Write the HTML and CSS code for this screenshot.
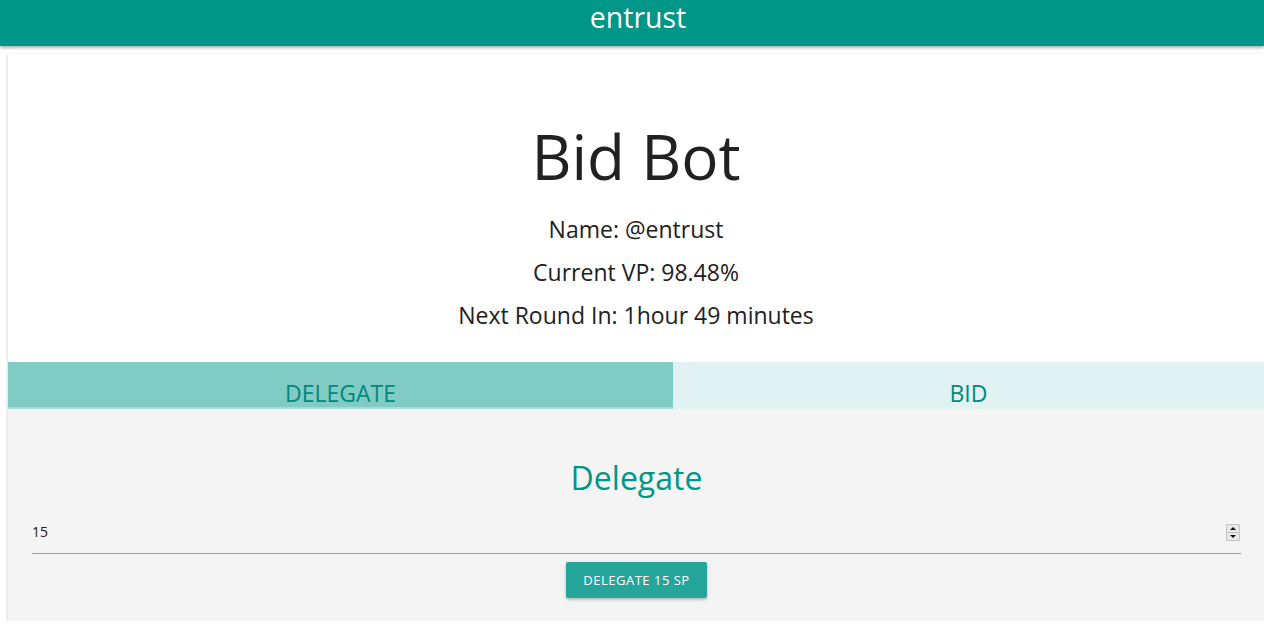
FILE: index.html
```html
<!DOCTYPE html>
<html>
<head>
<meta charset="utf-8">
<link rel="stylesheet" href="styles.css">
</head>
<body>
<header class="topbar"><span class="brand">entrust</span></header>
<main class="card">
  <section class="intro">
    <h1 class="title">Bid Bot</h1>
    <p class="info">Name: @entrust</p>
    <p class="info">Current VP: 98.48%</p>
    <p class="info">Next Round In: 1hour 49 minutes</p>
  </section>
  <nav class="tabs">
    <div class="tab tab-active">DELEGATE</div>
    <div class="tab tab-bid">BID</div>
  </nav>
  <section class="panel">
    <h2 class="panel-title">Delegate</h2>
    <div class="field">
      <span class="field-value">15</span>
      <span class="spinner"><span class="spin-up"></span><span class="spin-down"></span></span>
    </div>
    <div class="actions"><button class="btn">DELEGATE 15 SP</button></div>
  </section>
</main>
</body>
</html>
```
FILE: styles.css
```css
html, body {
  margin: 0;
  padding: 0;
  overflow: hidden;
  background: #ffffff;
  font-family: "Open Sans", "Noto Sans", sans-serif;
  color: #212121;
}
.topbar {
  height: 46px;
  padding-left: 12px;
  background: #009688;
  box-shadow: 0 2px 3px rgba(0,0,0,0.3);
  display: flex;
  justify-content: center;
  position: relative;
  z-index: 2;
}
.brand {
  color: #ffffff;
  font-size: 28.5px;
  line-height: 34px;
}
.card {
  margin: 8px 0 0 8px;
  background: #ffffff;
  box-shadow: 0 1px 3px rgba(0,0,0,0.25);
  display: flex;
  flex-direction: column;
}
.intro {
  padding: 62px 0 25px;
  text-align: center;
}
.title {
  margin: 0 0 12px;
  font-size: 62px;
  font-weight: 400;
  line-height: 80px;
}
.info {
  margin: 0;
  font-size: 23px;
  line-height: 43px;
}
.tabs {
  display: flex;
  height: 47px;
}
.tab {
  display: flex;
  align-items: flex-end;
  justify-content: center;
  padding-bottom: 2px;
  box-sizing: border-box;
  font-size: 23px;
  line-height: 28px;
  color: #00897b;
}
.tab-active {
  flex: 0 0 665px;
  background: #80cbc4;
  border-bottom: 2px solid #a6dbd5;
  padding-bottom: 0;
}
.tab-bid {
  flex: 1 1 auto;
  background: #e0f2f1;
}
.panel {
  background: #f4f4f4;
  padding: 49px 23px 23px 24px;
  display: flex;
  flex-direction: column;
}
.panel-title {
  margin: 0;
  text-align: center;
  font-size: 32px;
  font-weight: 400;
  line-height: 40px;
  color: #009688;
}
.field {
  margin-top: 11px;
  height: 45px;
  border-bottom: 1px solid #9e9e9e;
  display: flex;
  align-items: center;
  justify-content: space-between;
  padding-right: 1px;
  padding-top: 3px;
  box-sizing: border-box;
}
.field-value {
  font-size: 14px;
  color: #1a1a1a;
  position: relative;
  top: -1px;
}
.spinner {
  width: 12px;
  height: 15px;
  border: 1px solid #c4c4c4;
  background: #e8e8e8;
  display: flex;
  flex-direction: column;
}
.spin-up, .spin-down {
  flex: 1;
  display: flex;
  align-items: center;
  justify-content: center;
  position: relative;
}
.spin-up { border-bottom: 1px solid #c4c4c4; }
.spin-up::after {
  content: "";
  border-left: 3px solid transparent;
  border-right: 3px solid transparent;
  border-bottom: 3px solid #111;
}
.spin-down::after {
  content: "";
  border-left: 3px solid transparent;
  border-right: 3px solid transparent;
  border-top: 3px solid #111;
}
.actions {
  display: flex;
  justify-content: center;
  margin-top: 8px;
}
.btn {
  width: 141px;
  height: 36px;
  border: none;
  border-radius: 2px;
  background: #26a69a;
  color: #ffffff;
  font-family: "Open Sans", "Noto Sans", sans-serif;
  font-size: 13px;
  letter-spacing: 0.5px;
  box-shadow: 0 2px 2px rgba(0,0,0,0.14), 0 1px 5px rgba(0,0,0,0.12);
  padding: 0;
}
```
